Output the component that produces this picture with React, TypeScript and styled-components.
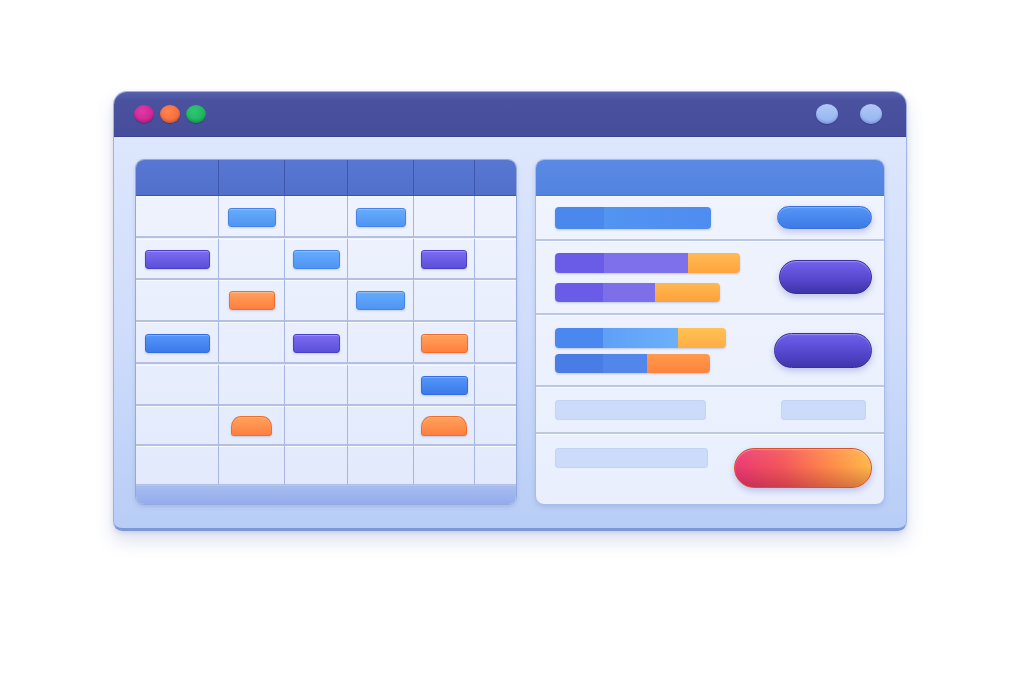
import styled, { createGlobalStyle } from "styled-components";

const GlobalStyle = createGlobalStyle`
  *, *::before, *::after {
    box-sizing: border-box;
  }
  html, body {
    margin: 0;
    padding: 0;
    background: #ffffff;
    font-family: "Inter", "Liberation Sans", sans-serif;
  }
`;

type Tone = "sky" | "blue" | "violet" | "orange";

const tones: Record<Tone, { top: string; bottom: string; edge: string }> = {
  sky: { top: "#66acfb", bottom: "#4f95f2", edge: "#4584e6" },
  blue: { top: "#5497fa", bottom: "#3c79ea", edge: "#336ddf" },
  violet: { top: "#7c6cf1", bottom: "#5c4fd9", edge: "#4a3dc6" },
  orange: { top: "#ffa25c", bottom: "#ff7f3f", edge: "#f26c2c" },
};

type Slot = { tone: Tone; w: number; tab?: boolean } | null;

const columns = [83, 66, 63, 66, 61];
const rowHeights = [42, 41, 42, 42, 41, 40, 40];

const schedule: Slot[][] = [
  [null, { tone: "sky", w: 48 }, null, { tone: "sky", w: 50 }, null, null],
  [{ tone: "violet", w: 65 }, null, { tone: "sky", w: 47 }, null, { tone: "violet", w: 46 }, null],
  [null, { tone: "orange", w: 46 }, null, { tone: "sky", w: 49 }, null, null],
  [{ tone: "blue", w: 65 }, null, { tone: "violet", w: 47 }, null, { tone: "orange", w: 47 }, null],
  [null, null, null, null, { tone: "blue", w: 47 }, null],
  [null, { tone: "orange", w: 41, tab: true }, null, null, { tone: "orange", w: 46, tab: true }, null],
  [null, null, null, null, null, null],
];

const Page = styled.div`
  padding: 91px 0 0 113px;
  height: 682px;
`;

const Window = styled.div`
  width: 794px;
  border-radius: 14px 14px 9px 9px;
  background: linear-gradient(180deg, #e0e9fd 0%, #cfddfb 55%, #b8cdf6 100%);
  border: 1px solid #9fb2e4;
  border-bottom: 3px solid #7e97d8;
  box-shadow: 0 10px 18px rgba(70, 90, 160, 0.18), 0 2px 4px rgba(70, 90, 160, 0.15);
  overflow: hidden;
`;

const TitleBar = styled.div`
  height: 45px;
  display: flex;
  align-items: center;
  justify-content: space-between;
  padding: 0 24px 0 20px;
  background: linear-gradient(180deg, #5660ad 0%, #4a52a0 20%, #464e9b 100%);
  border-bottom: 1px solid #3b4390;
`;

const Lights = styled.div`
  display: flex;
  gap: 6px;
`;

const Light = styled.span<{ $c: string }>`
  width: 20px;
  height: 18px;
  border-radius: 50%;
  background: ${(p) => p.$c};
  box-shadow: inset 0 -2px 2px rgba(0, 0, 0, 0.15), 0 1px 1px rgba(20, 20, 80, 0.3);
`;

const Knobs = styled.div`
  display: flex;
  gap: 22px;
`;

const Knob = styled.span`
  width: 22px;
  height: 20px;
  border-radius: 50%;
  background: linear-gradient(180deg, #b0c8f6 0%, #95b3ef 100%);
  box-shadow: inset 0 -2px 2px rgba(60, 80, 170, 0.25), 0 1px 1px rgba(20, 20, 80, 0.3);
`;

const Body = styled.div`
  display: flex;
  gap: 18px;
  padding: 22px 21px 23px 21px;
`;

const Calendar = styled.div`
  width: 382px;
  border-radius: 9px;
  overflow: hidden;
  border: 1px solid #95a9dc;
  background: linear-gradient(180deg, #f0f4fe 0%, #e1e9fc 100%);
  box-shadow: 0 2px 4px rgba(80, 100, 170, 0.2);
  display: grid;
  grid-template-columns: ${columns.map((c) => `${c}px`).join(" ")} 1fr;
`;

const HeadCell = styled.div`
  height: 36px;
  background: linear-gradient(180deg, #5777d3 0%, #5170cc 100%);
  border-right: 1px solid #3f56ad;
  border-bottom: 1px solid #3b52a8;
  &:nth-child(6) {
    border-right: none;
  }
`;

const Cell = styled.div<{ $h: number; $last: boolean }>`
  height: ${(p) => p.$h}px;
  display: flex;
  align-items: center;
  justify-content: center;
  padding-top: 2px;
  border-right: ${(p) => (p.$last ? "none" : "1px solid #a7b6e0")};
  border-bottom: 2px solid #b3c0e2;
  box-shadow: inset 0 1px 0 #f8faff;
`;

const Event = styled.div<{ $tone: Tone; $w: number; $tab?: boolean }>`
  width: ${(p) => p.$w}px;
  height: ${(p) => (p.$tab ? 20 : 19)}px;
  border-radius: ${(p) => (p.$tab ? "10px 10px 3px 3px / 11px 11px 3px 3px" : "3px")};
  background: linear-gradient(
    180deg,
    ${(p) => tones[p.$tone].top} 0%,
    ${(p) => tones[p.$tone].bottom} 100%
  );
  border: 1px solid ${(p) => tones[p.$tone].edge};
  box-shadow: inset 0 1px 0 rgba(255, 255, 255, 0.25), 0 1px 2px rgba(40, 60, 150, 0.2);
`;

const CalFooter = styled.div`
  grid-column: 1 / -1;
  height: 19px;
  margin-top: -2px;
  background: linear-gradient(180deg, #a6bcf1 0%, #94acec 100%);
  border-top: 1px solid #b6c6ef;
`;

const Side = styled.div`
  flex: 1;
  display: flex;
  flex-direction: column;
  border-radius: 9px;
  overflow: hidden;
  border: 1px solid #a9bbe8;
  background: linear-gradient(180deg, #f0f4fe 0%, #e9effd 100%);
  box-shadow: 0 2px 5px rgba(80, 100, 170, 0.2);
`;

const SideHead = styled.div`
  height: 36px;
  flex: none;
  background: linear-gradient(180deg, #5a8ae6 0%, #5283e0 100%);
  border-bottom: 1px solid #4a74cc;
`;

const Row = styled.div<{ $h: number; $top?: boolean }>`
  height: ${(p) => p.$h}px;
  flex: none;
  display: flex;
  align-items: ${(p) => (p.$top ? "flex-start" : "center")};
  justify-content: space-between;
  padding: ${(p) => (p.$top ? "14px" : "0")} 12px 0 19px;
  border-bottom: 2px solid #bcc7e4;
  box-shadow: inset 0 1px 0 #f9fbff;
  &:last-child {
    border-bottom: none;
  }
`;

const Stack = styled.div<{ $gap: number }>`
  display: flex;
  flex-direction: column;
  align-items: flex-start;
  gap: ${(p) => p.$gap}px;
`;

const Bar = styled.div<{ $h: number }>`
  display: flex;
  height: ${(p) => p.$h}px;
  border-radius: 4px;
  overflow: hidden;
  box-shadow: 0 1px 2px rgba(50, 70, 160, 0.25);
`;

const Segment = styled.div<{ $w: number; $c: string }>`
  width: ${(p) => p.$w}px;
  background: ${(p) => p.$c};
`;

const Pill = styled.div<{ $w: number; $h: number; $bg: string; $edge: string }>`
  width: ${(p) => p.$w}px;
  height: ${(p) => p.$h}px;
  border-radius: ${(p) => p.$h / 2}px;
  background: ${(p) => p.$bg};
  border: 1px solid ${(p) => p.$edge};
  box-shadow: inset 0 1px 1px rgba(255, 255, 255, 0.3), 0 3px 6px rgba(60, 60, 170, 0.25);
`;

const Ghost = styled.div<{ $w: number; $mr?: number }>`
  width: ${(p) => p.$w}px;
  height: 20px;
  margin-right: ${(p) => p.$mr ?? 0}px;
  border-radius: 3px;
  background: #cddbfa;
  border: 1px solid #c3d3f6;
`;

type Seg = [number, string];

function StackBar({ segs, h }: { segs: Seg[]; h: number }) {
  return (
    <Bar $h={h}>
      {segs.map(([w, c], i) => (
        <Segment key={i} $w={w} $c={c} />
      ))}
    </Bar>
  );
}

export default function App() {
  return (
    <>
      <GlobalStyle />
      <Page>
        <Window>
          <TitleBar>
            <Lights>
              <Light $c="radial-gradient(circle at 40% 35%, #e03aa6, #c21a86)" />
              <Light $c="radial-gradient(circle at 40% 35%, #ff8450, #f0602e)" />
              <Light $c="radial-gradient(circle at 40% 35%, #2ec872, #17a656)" />
            </Lights>
            <Knobs>
              <Knob />
              <Knob />
            </Knobs>
          </TitleBar>
          <Body>
            <Calendar>
              {Array.from({ length: 6 }).map((_, i) => (
                <HeadCell key={`h${i}`} />
              ))}
              {schedule.map((row, r) =>
                row.map((slot, c) => (
                  <Cell key={`${r}-${c}`} $h={rowHeights[r]} $last={c === 5}>
                    {slot && <Event $tone={slot.tone} $w={slot.w} $tab={slot.tab} />}
                  </Cell>
                ))
              )}
              <CalFooter />
            </Calendar>
            <Side>
              <SideHead />
              <Row $h={45}>
                <StackBar h={22} segs={[[49, "#4a88ee"], [107, "linear-gradient(90deg,#5294f2,#4f8cf0)"]]} />
                <Pill $w={95} $h={23} $bg="linear-gradient(180deg,#5496f6,#3e7ae6)" $edge="#3a70dc" />
              </Row>
              <Row $h={74}>
                <Stack $gap={10}>
                  <StackBar
                    h={20}
                    segs={[
                      [49, "#6a5ce6"],
                      [84, "#7e6feb"],
                      [52, "linear-gradient(180deg,#ffbb55,#ffa43e)"],
                    ]}
                  />
                  <StackBar
                    h={19}
                    segs={[
                      [48, "#6a5ce6"],
                      [52, "#7d6eea"],
                      [65, "linear-gradient(180deg,#ffb852,#ffa03c)"],
                    ]}
                  />
                </Stack>
                <Pill
                  $w={93}
                  $h={34}
                  $bg="linear-gradient(180deg,#7262ec 0%,#5848d0 55%,#3f34a8 100%)"
                  $edge="#3a2f98"
                />
              </Row>
              <Row $h={72}>
                <Stack $gap={6}>
                  <StackBar
                    h={20}
                    segs={[
                      [48, "#4a88f0"],
                      [75, "linear-gradient(90deg,#5ea0f6,#6cb0fa)"],
                      [48, "linear-gradient(180deg,#ffc255,#ffae42)"],
                    ]}
                  />
                  <StackBar
                    h={19}
                    segs={[
                      [48, "#4a7ce6"],
                      [44, "#5286ea"],
                      [63, "linear-gradient(180deg,#ff9a4e,#ff833c)"],
                    ]}
                  />
                </Stack>
                <Pill
                  $w={98}
                  $h={35}
                  $bg="linear-gradient(180deg,#6f60ea 0%,#5647cf 55%,#4036aa 100%)"
                  $edge="#3a2f98"
                />
              </Row>
              <Row $h={47}>
                <Ghost $w={151} />
                <Ghost $w={85} $mr={6} />
              </Row>
              <Row $h={70} $top>
                <Ghost $w={153} />
                <Pill
                  $w={138}
                  $h={40}
                  $bg="linear-gradient(180deg,rgba(255,255,255,0.08) 0%,rgba(255,255,255,0) 45%,rgba(110,0,40,0.28) 100%),linear-gradient(90deg,#ea3a72 0%,#f4565a 35%,#ff8a48 70%,#ffb84a 100%)"
                  $edge="#d8502e"
                />
              </Row>
            </Side>
          </Body>
        </Window>
      </Page>
    </>
  );
}
